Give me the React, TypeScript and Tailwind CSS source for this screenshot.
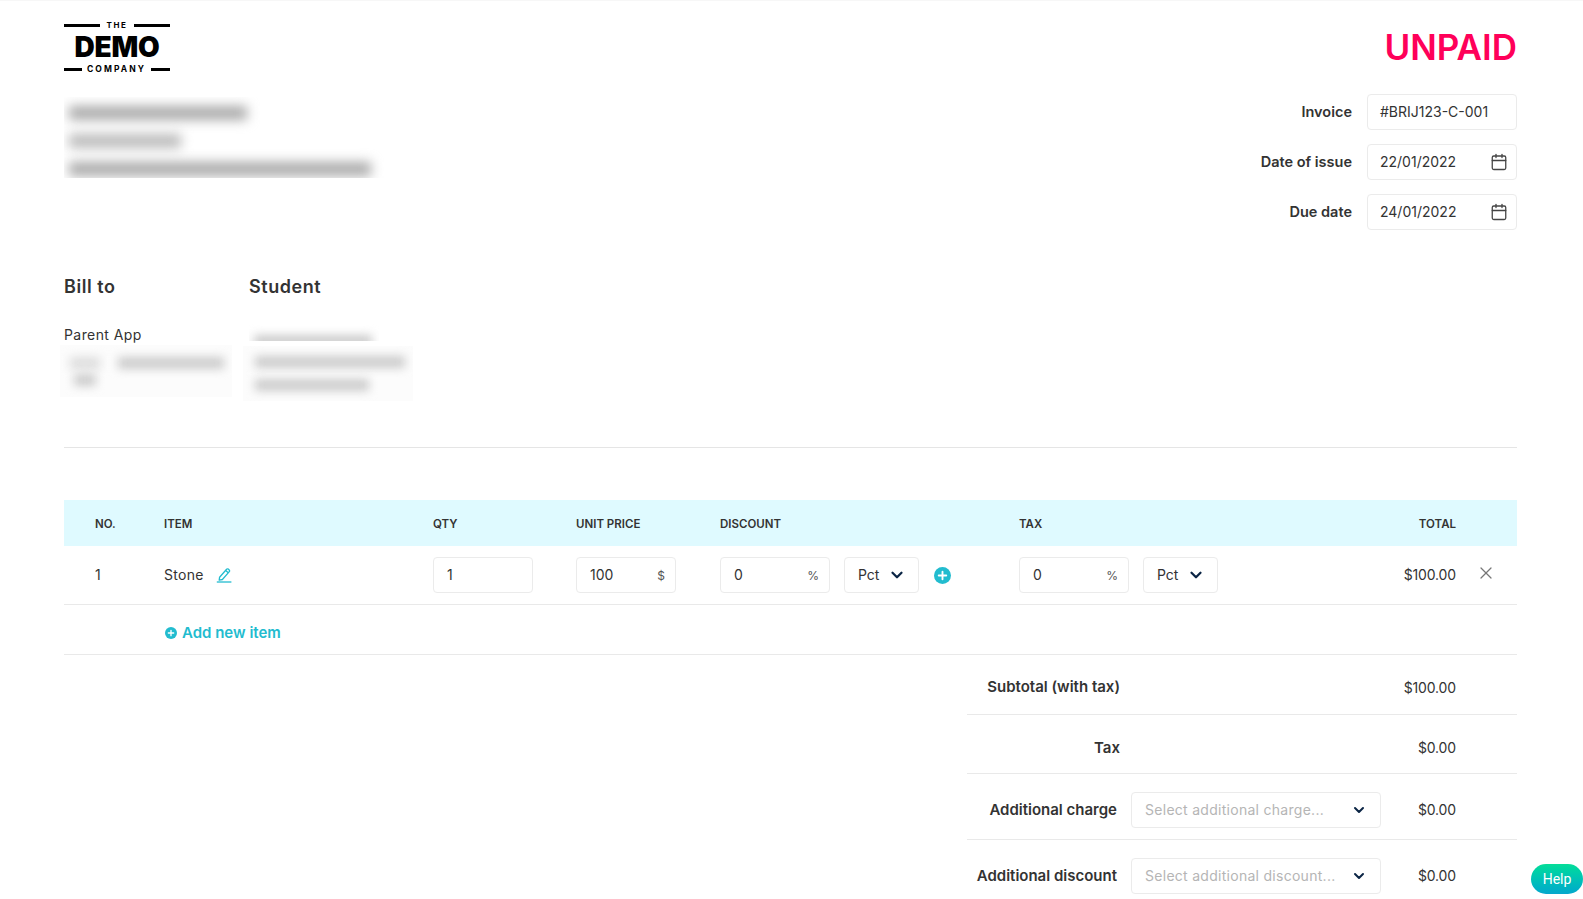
import React from 'react';
import { Calendar, ChevronDown, X } from 'lucide-react';

const inputBox = 'flex h-9 items-center rounded-[4px] border border-[#ebebeb] bg-white text-sm';

// lapiz con subrayado completo
const EditIcon = () => (
  <svg width="16" height="16" viewBox="0 0 16 16" fill="none" stroke="#22bccf" strokeWidth="1.3" strokeLinejoin="round">
    <path d="M3.6 10.2 10.6 2.2a1.2 1.2 0 0 1 1.7-.1l.9.8a1.2 1.2 0 0 1 .1 1.7L6.4 12.5l-3.2.6z" />
    <path d="M9.6 3.4l2.7 2.4" />
    <path d="M.8 15h14.6" strokeWidth="1.3" />
  </svg>
);

const PlusCircle = ({ size }: { size: number }) => (
  <svg width={size} height={size} viewBox="0 0 18 18">
    <circle cx="9" cy="9" r="9" fill="#22bccf" />
    <path d="M9 5v8M5 9h8" stroke="#fff" strokeWidth="2" strokeLinecap="round" />
  </svg>
);

const Logo = () => (
  <div className="flex w-[106px] flex-col text-black">
    <div className="flex h-[6px] items-center justify-between">
      <div className="h-[3px] w-[36px] bg-black" />
      <span className="text-[8px] leading-none font-bold tracking-[0.2em]">THE</span>
      <div className="h-[3px] w-[36px] bg-black" />
    </div>
    <div className="mt-[5px] text-center text-[28px] leading-[28px] font-black tracking-[-0.01em]">DEMO</div>
    <div className="mt-[5px] flex h-[6px] items-center justify-between">
      <div className="h-[3px] w-[18px] bg-black" />
      <span className="text-[8.5px] leading-none font-bold tracking-[0.24em]">COMPANY</span>
      <div className="h-[3px] w-[19px] bg-black" />
    </div>
  </div>
);

const DateField = ({ label, value }: { label: string; value: string }) => (
  <div className="flex items-center justify-end gap-[15px]">
    <span className="text-[14.5px] font-semibold text-[#333]">{label}</span>
    <div className={`${inputBox} w-[150px] justify-between pr-[8px] pl-[12px] text-[#333]`}>
      {value}
      <Calendar size={18} strokeWidth={1.7} className="text-[#444]" />
    </div>
  </div>
);

const PctSelect = () => (
  <div className={`${inputBox} w-[75px] justify-between pr-[12px] pl-[13px] text-[#333]`}>
    Pct
    <ChevronDown size={18} strokeWidth={3} className="text-[#0b2545]" />
  </div>
);

const UnitInput = ({ value, unit, width }: { value: string; unit: string; width: string }) => (
  <div className={`${inputBox} ${width} justify-between pr-[10px] pl-[13px] text-[#333]`}>
    {value}
    <span className="pt-[2px] text-xs text-[#555]">{unit}</span>
  </div>
);

const SummarySelect = ({ placeholder }: { placeholder: string }) => (
  <div className={`${inputBox} w-[250px] justify-between pr-[13px] pl-[13px] text-[#b5b5b5]`}>
    <span className="tracking-[0.02em] whitespace-nowrap">{placeholder}</span>
    <ChevronDown size={16} strokeWidth={3} className="shrink-0 text-[#0b2545]" />
  </div>
);

const tableCols = 'grid grid-cols-[100px_269px_143px_144px_299px_1fr] items-center';

export default function App() {
  return (
    <div className="relative h-[899px] overflow-hidden border-t border-[#f7f7f7] bg-white font-['Inter','Noto_Sans',sans-serif] text-[#333]">
      <div className="pr-[66px] pl-[64px]">
        {/* Cabecera */}
        <div className="flex h-[260px] justify-between">
          <div className="pt-[21px]">
            <Logo />
            <div className="relative mt-[25px] h-[81px] w-[320px] overflow-hidden">
              <div className="absolute top-[9px] left-[5px] h-[14px] w-[178px] bg-[#aaa] blur-[6px]" />
              <div className="absolute top-[37px] left-[5px] h-[14px] w-[112px] bg-[#bbb] blur-[6px]" />
              <div className="absolute top-[65px] left-[5px] h-[14px] w-[302px] bg-[#aaa] blur-[6px]" />
            </div>
          </div>
          <div className="w-[300px]">
            <div className="pt-[27px] text-right text-[35px] leading-[38px] font-semibold text-[#ff0059]">UNPAID</div>
            <div className="mt-[28px] flex flex-col gap-[14px]">
              <div className="flex items-center justify-end gap-[15px]">
                <span className="text-[14.5px] font-semibold text-[#333]">Invoice</span>
                <div className={`${inputBox} w-[150px] pl-[12px] text-[#333]`}>#BRIJ123-C-001</div>
              </div>
              <DateField label="Date of issue" value="22/01/2022" />
              <DateField label="Due date" value="24/01/2022" />
            </div>
          </div>
        </div>

        {/* Bill to / Student */}
        <div className="flex h-[187px] border-b border-[#e5e5e5]">
          <div className="w-[185px]">
            <h2 className="pt-[14px] text-lg leading-6 font-semibold tracking-[0.03em]">Bill to</h2>
            <p className="mt-[26px] text-sm leading-5 tracking-[0.03em]">Parent App</p>
            <div className="relative -ml-1 h-[52px] w-[172px] overflow-hidden bg-[#fcfcfc]">
              <div className="absolute top-[12px] left-[58px] h-[12px] w-[106px] bg-[#ccc] blur-[5px]" />
              <div className="absolute top-[12px] left-[10px] h-[12px] w-[30px] bg-[#ddd] blur-[5px]" />
              <div className="absolute top-[29px] left-[14px] h-[12px] w-[22px] bg-[#ccc] blur-[5px]" />
            </div>
          </div>
          <div>
            <h2 className="pt-[14px] text-lg leading-6 font-semibold tracking-[0.03em]">Student</h2>
            <div className="relative mt-[22px] h-[20px] w-[130px] overflow-hidden">
              <div className="absolute top-[14px] left-[5px] h-[12px] w-[118px] bg-[#ccc] blur-[5px]" />
            </div>
            <div className="relative mt-[5px] -ml-[6px] h-[55px] w-[170px] overflow-hidden bg-[#fcfcfc]">
              <div className="absolute top-[10px] left-[12px] h-[12px] w-[150px] bg-[#ccc] blur-[5px]" />
              <div className="absolute top-[33px] left-[12px] h-[12px] w-[114px] bg-[#ccc] blur-[5px]" />
            </div>
          </div>
        </div>

        {/* Tabla */}
        <div className={`${tableCols} mt-[52px] h-[46px] bg-[#dffaff] pt-[4px] text-[11.5px] font-semibold text-[#333]`}>
          <span className="pl-[31px]">NO.</span>
          <span>ITEM</span>
          <span>QTY</span>
          <span>UNIT PRICE</span>
          <span>DISCOUNT</span>
          <span className="flex justify-between pr-[61px]">
            TAX
            <span>TOTAL</span>
          </span>
        </div>
        <div className={`${tableCols} h-[59px] border-b border-[#e9e9e9] text-sm`}>
          <span className="pl-[31px]">1</span>
          <span className="flex items-center gap-[12px] tracking-[0.02em]">
            Stone
            <EditIcon />
          </span>
          <div className={`${inputBox} w-[100px] pl-[13px]`}>1</div>
          <UnitInput value="100" unit="$" width="w-[100px]" />
          <div className="flex items-center">
            <UnitInput value="0" unit="%" width="w-[110px]" />
            <div className="ml-[14px]">
              <PctSelect />
            </div>
            <div className="ml-[15px] flex">
              <PlusCircle size={17} />
            </div>
          </div>
          <div className="flex items-center">
            <UnitInput value="0" unit="%" width="w-[110px]" />
            <div className="ml-[14px]">
              <PctSelect />
            </div>
            <span className="ml-auto tracking-[-0.01em]">$100.00</span>
            <span className="flex w-[61px] justify-end pr-[21px] pb-1">
              <X size={20} strokeWidth={1.5} className="text-[#777]" />
            </span>
          </div>
        </div>
        <div className="flex h-[50px] items-center gap-[5px] border-b border-[#e9e9e9] pt-[8px] pl-[101px] text-[15px] font-semibold text-[#22bccf]">
          <span className="-mt-[2px] flex">
            <PlusCircle size={12} />
          </span>
          Add new item
        </div>

        {/* Totales */}
        <div className="ml-auto w-[550px] text-sm">
          <div className="flex h-[60px] items-center justify-between border-b border-[#e9e9e9] pt-[6px] pr-[61px]">
            <span className="w-[153px] pb-[2px] text-right text-[15px] font-semibold">Subtotal (with tax)</span>
            <span className="tracking-[-0.01em]">$100.00</span>
          </div>
          <div className="flex h-[59px] items-center justify-between border-b border-[#e9e9e9] pt-[8px] pr-[61px]">
            <span className="w-[153px] text-right text-[15px] font-semibold">Tax</span>
            <span className="tracking-[-0.01em]">$0.00</span>
          </div>
          <div className="flex h-[66px] items-center justify-between border-b border-[#e9e9e9] pt-[6px] pr-[61px]">
            <div className="flex items-center gap-[14px]">
              <span className="w-[150px] text-right text-[15px] font-semibold">Additional charge</span>
              <SummarySelect placeholder="Select additional charge..." />
            </div>
            <span className="tracking-[-0.01em]">$0.00</span>
          </div>
          <div className="flex h-[66px] items-center justify-between pt-[6px] pr-[61px]">
            <div className="flex items-center gap-[14px]">
              <span className="w-[150px] text-right text-[15px] font-semibold whitespace-nowrap">Additional discount</span>
              <SummarySelect placeholder="Select additional discount..." />
            </div>
            <span className="tracking-[-0.01em]">$0.00</span>
          </div>
        </div>
      </div>

      {/* Boton de ayuda */}
      <div className="absolute top-[863px] right-0 flex h-[30px] w-[52px] items-center justify-center rounded-[15px] bg-gradient-to-b from-[#07dd98] to-[#08a7cc] font-['Roboto',sans-serif] text-sm text-white">
        Help
      </div>
    </div>
  );
}
